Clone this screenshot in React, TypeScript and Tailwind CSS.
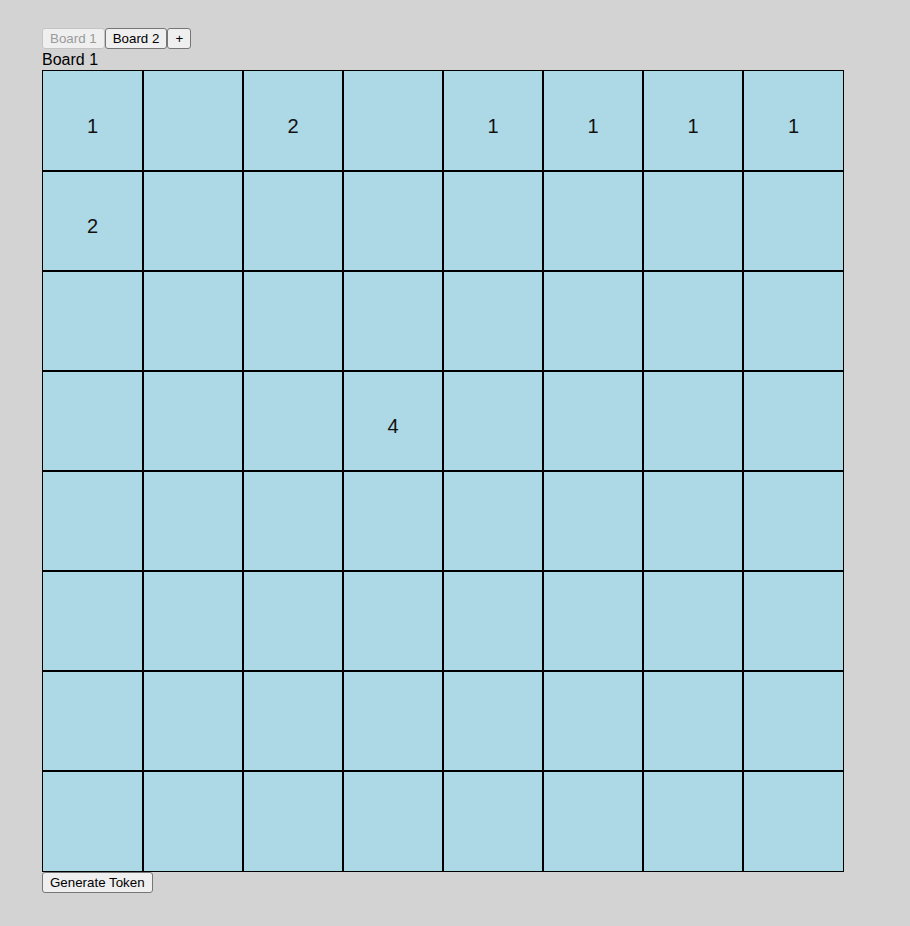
import React, { useState } from 'react'

// cell values, row by row; empty string = blank cell
const CELLS: Record<string, string> = {
  '0-0': '1',
  '0-2': '2',
  '0-4': '1',
  '0-5': '1',
  '0-6': '1',
  '0-7': '1',
  '1-0': '2',
  '3-3': '4',
}

const BTN = 'h-[21px] px-[7px] text-[13.33px] leading-none text-black bg-[#efefef] border border-[#767676] rounded-[3px]'
const BTN_OFF = 'h-[21px] px-[7px] text-[13.33px] leading-none text-[#9a9a9a] bg-[#efefef] border border-[#c4c4c4] rounded-[3px]'

const Cell: React.FC<{ r: number; c: number }> = ({ r, c }) => {
  const value = CELLS[`${r}-${c}`] || ''
  return (
    <div
      className={`h-[100px] bg-[#add8e6] border-black flex items-center justify-center pt-[10px] text-[20px] text-[#111] ${c === 0 ? '' : 'border-l'} ${c === 7 ? '' : 'border-r'} ${r === 0 ? '' : 'border-t'} ${r === 7 ? '' : 'border-b'}`}
    >
      {value}
    </div>
  )
}

export default function App() {
  const [board, setBoard] = useState(1)

  return (
    <div className="min-h-[926px] bg-[#d3d3d3] pt-[28px] pl-[42px] font-['Liberation_Sans',Arial,sans-serif]">
      <div className="flex">
        <button className={board === 1 ? BTN_OFF : BTN} disabled={board === 1} onClick={() => setBoard(1)}>Board 1</button>
        <button className={board === 2 ? BTN_OFF : BTN} disabled={board === 2} onClick={() => setBoard(2)}>Board 2</button>
        <button className={BTN}>+</button>
      </div>
      <div className="text-[16px] leading-[21px] text-black">Board {board}</div>
      <div className="w-[802px] border border-black grid grid-cols-8">
        {Array.from({ length: 8 }).map((_, r) =>
          Array.from({ length: 8 }).map((__, c) => <Cell key={`${r}-${c}`} r={r} c={c} />)
        )}
      </div>
      <div className="flex">
        <button className={`${BTN} px-[6px]`}>Generate Token</button>
      </div>
    </div>
  )
}
